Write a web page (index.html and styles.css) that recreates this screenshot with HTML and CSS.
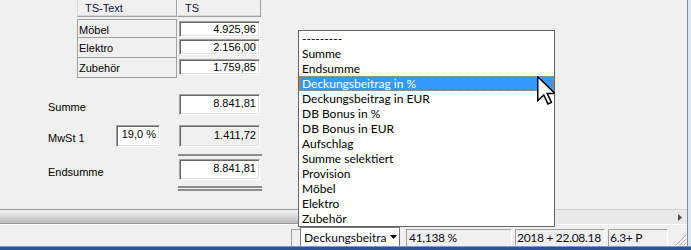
FILE: index.html
```html
<!DOCTYPE html>
<html lang="de">
<head>
<meta charset="utf-8">
<title>Auswertung</title>
<link rel="stylesheet" href="styles.css">
</head>
<body>
<div class="window">
  <div class="frame-body">
    <div class="client">
      <div class="main">
        <div class="grid-table">
          <div class="th th-first">TS-Text</div>
          <div class="th">TS</div>
          <div class="td-label">Möbel</div>
          <div class="td-val"><div class="field">4.925,96</div></div>
          <div class="td-label">Elektro</div>
          <div class="td-val"><div class="field">2.156,00</div></div>
          <div class="td-label td-last">Zubehör</div>
          <div class="td-val"><div class="field">1.759,85</div></div>
        </div>
        <div class="totals">
          <div class="trow r-summe">
            <span class="tlabel">Summe</span>
            <div class="field f-val">8.841,81</div>
          </div>
          <div class="trow r-mwst">
            <span class="tlabel">MwSt 1</span>
            <div class="field f-pct">19,0 %</div>
            <div class="field f-val f-disabled">1.411,72</div>
          </div>
          <div class="trow r-rule">
            <div class="rule"></div>
          </div>
          <div class="trow r-end">
            <span class="tlabel">Endsumme</span>
            <div class="field f-val">8.841,81</div>
          </div>
          <div class="trow r-double">
            <div class="double"><div class="rule"></div><div class="rule"></div></div>
          </div>
        </div>
      </div>
      <div class="hscroll">
        <div class="thumb"></div>
        <div class="track"></div>
        <div class="sbtn"><svg width="4" height="7" viewBox="0 0 4 7"><path d="M0 0 L4 3.5 L0 7 Z" fill="#4a4a4a"/></svg></div>
      </div>
      <div class="status">
        <div class="sp-empty"></div>
        <div class="sp-bracket"></div>
        <div class="combo">
          <span class="combo-text">Deckungsbeitra</span>
          <span class="combo-btn"><svg width="7" height="4" viewBox="0 0 7 4"><path d="M0 0 H7 L3.5 4 Z" fill="#000"/></svg></span>
        </div>
        <div class="panel p-pct">41,138 %</div>
        <div class="panel p-date">2018 + 22.08.18</div>
        <div class="panel p-ver">6.3+ P</div>
        <div class="grip"><svg width="12" height="12" viewBox="0 0 12 12">
          <path d="M11 1 L1 11 M11 5 L5 11 M11 9 L9 11" stroke="#a8a8a8" stroke-width="1"/>
          <path d="M12 2 L2 12 M12 6 L6 12 M12 10 L10 12" stroke="#ffffff" stroke-width="1"/>
        </svg></div>
      </div>
    </div>
    <div class="rframe"></div>
  </div>
  <div class="bframe"></div>

  <ul class="dropdown">
    <li>---------</li>
    <li>Summe</li>
    <li>Endsumme</li>
    <li class="sel">Deckungsbeitrag in %</li>
    <li>Deckungsbeitrag in EUR</li>
    <li>DB Bonus in %</li>
    <li>DB Bonus in EUR</li>
    <li>Aufschlag</li>
    <li>Summe selektiert</li>
    <li>Provision</li>
    <li>Möbel</li>
    <li>Elektro</li>
    <li>Zubehör</li>
  </ul>

  <svg class="cursor" width="18" height="29" viewBox="0 0 12 19.3">
    <path d="M0.5 0.5 L0.5 16.5 L4.5 12.6 L7.3 18.6 L9.6 17.6 L6.8 11.6 L12 11.6 Z" fill="#fff" stroke="#000" stroke-width="1" stroke-linejoin="miter"/>
  </svg>
</div>
</body>
</html>
```

FILE: styles.css
```css
html, body {
  margin: 0;
  padding: 0;
  background: #f0f0f0;
}

.window {
  position: relative;
  width: 691px;
  height: 250px;
  overflow: hidden;
  background: #f0f0f0;
  font-family: "Liberation Sans", Arial, sans-serif;
  font-size: 11px;
  color: #000;
}

.frame-body {
  display: flex;
  height: 246px;
}

.client {
  width: 687px;
  display: flex;
  flex-direction: column;
}

.main {
  height: 209px;
}

.rframe {
  width: 4px;
  box-sizing: border-box;
  border-left: 1px solid #7f8a96;
  background: #dbe6f2;
}

.bframe {
  height: 4px;
  box-sizing: border-box;
  border-top: 1px solid #6f9ddc;
  background: #2c5491;
}

/* ---------- table ---------- */
.grid-table {
  margin-left: 77px;
  width: 184px;
  display: grid;
  grid-template-columns: 100px 84px;
  grid-template-rows: 17px 20px 20px 21px;
}

.th {
  box-sizing: border-box;
  height: 17px;
  padding-left: 7px;
  line-height: 16px;
  color: #14104a;
  background: #f0f0f0;
  border-left: 1px solid #ffffff;
  border-right: 1px solid #a0a0a0;
  border-bottom: 1px solid #a0a0a0;
  box-shadow: inset 0 -1px 0 #d8d8d8;
}

.th-first {
  border-left: 1px solid #d8d8d8;
}

.grid-table .td-label:nth-child(3),
.grid-table .td-val:nth-child(4) {
  margin-top: 2px;
}

.td-label {
  box-sizing: border-box;
  border-top: 1px solid #a0a0a0;
  border-left: 1px solid #a0a0a0;
  border-right: 1px solid #a0a0a0;
  padding-left: 1px;
  display: flex;
  align-items: center;
  height: 20px;
}

.td-last {
  border-bottom: 1px solid #a0a0a0;
  height: 21px;
}

.td-val {
  padding-left: 2px;
  padding-top: 2px;
}

.field {
  box-sizing: border-box;
  width: 81px;
  height: 16px;
  background: #fff;
  border: 1px solid;
  border-color: #a0a0a0 #ffffff #ffffff #a0a0a0;
  box-shadow: inset 1px 1px 0 #696969, inset -1px -1px 0 #e3e3e3;
  text-align: right;
  padding-right: 3px;
  line-height: 14px;
}

/* ---------- totals ---------- */
.totals {
  display: flex;
  flex-direction: column;
}

.trow {
  display: grid;
  grid-template-columns: 48px 68px 44px 19px 81px;
  align-items: center;
}

.tlabel {
  grid-column: 2;
  padding-top: 4px;
}

.f-val {
  grid-column: 5;
  height: 21px;
  line-height: 15px;
  padding-top: 1px;
}

.f-pct {
  grid-column: 3;
  width: 44px;
  height: 22px;
  line-height: 17px;
}

.f-disabled {
  background: #f0f0f0;
  height: 22px;
  line-height: 17px;
}

.r-summe {
  margin-top: 16px;
  height: 21px;
}

.r-mwst {
  margin-top: 10px;
  height: 22px;
}

.r-rule {
  margin-top: 7px;
}

.rule {
  grid-column: 5;
  height: 2px;
  margin-left: -1px;
  width: 84px;
  background: #8c8c8c;
}

.r-end {
  margin-top: 3px;
  height: 21px;
}

.r-double {
  margin-top: 6px;
}

.double {
  grid-column: 5;
  display: flex;
  flex-direction: column;
  gap: 1px;
}

/* ---------- scrollbar ---------- */
.hscroll {
  height: 16px;
  display: flex;
  border-bottom: 1px solid #ffffff;
  box-sizing: border-box;
}

.thumb {
  flex: 0 0 545px;
  box-sizing: border-box;
  border-top: 1px solid #979797;
  border-bottom: 1px solid #979797;
  background: linear-gradient(#f2f2f2, #e4e4e4 35%, #d3d3d3 55%, #c6c6c6 80%, #bcbcbc);
}

.track {
  flex: 1;
  box-sizing: border-box;
  border-top: 1px solid #d4d4d4;
  background: #e9e9e9;
}

.sbtn {
  width: 16px;
  box-sizing: border-box;
  border-top: 1px solid #d4d4d4;
  background: #e9e9e9;
  display: flex;
  align-items: center;
  justify-content: center;
  padding-left: 2px;
}

/* ---------- status bar ---------- */
.status {
  height: 21px;
  display: flex;
  align-items: flex-end;
  font-family: Lato, "Noto Sans", sans-serif;
  font-size: 12px;
  letter-spacing: -0.3px;
  color: #0a0a28;
}

.sp-empty {
  width: 291px;
}

.sp-bracket {
  box-sizing: border-box;
  width: 9px;
  height: 17px;
  border-left: 1px solid #a0a0a0;
  border-top: 1px solid #a0a0a0;
}

.combo {
  box-sizing: border-box;
  width: 100px;
  height: 19px;
  background: #fff;
  border: 1px solid #7a7a7a;
  border-bottom: none;
  display: flex;
  align-items: center;
  letter-spacing: 0;
}

.combo-text {
  flex: 1;
  padding-left: 3px;
  overflow: hidden;
  white-space: nowrap;
}

.combo-btn {
  width: 12px;
  height: 100%;
  display: flex;
  align-items: center;
  justify-content: center;
}

.panel {
  box-sizing: border-box;
  height: 17px;
  margin-left: 6px;
  padding-left: 2px;
  line-height: 15px;
  white-space: nowrap;
  overflow: hidden;
  border: 1px solid;
  border-color: #a0a0a0 #ffffff #ffffff #a0a0a0;
  border-bottom: none;
}

.p-pct { width: 106px; }
.p-date { width: 90px; margin-left: 3px; padding-left: 1px; }
.p-ver { width: 60px; margin-left: 3px; padding-left: 1px; }

.grip {
  margin-left: auto;
  width: 12px;
  height: 12px;
  display: flex;
}

/* ---------- dropdown list ---------- */
.dropdown {
  position: absolute;
  left: 298px;
  top: 30px;
  width: 257px;
  margin: 0;
  padding: 0;
  list-style: none;
  box-sizing: border-box;
  background: #fff;
  border: 1px solid #646464;
  font-family: Lato, "Noto Sans", sans-serif;
  font-size: 12px;
  color: #000;
}

.dropdown li {
  height: 15px;
  line-height: 15px;
  padding-left: 3px;
  white-space: nowrap;
}

.dropdown li.sel {
  box-sizing: border-box;
  background: #3399ff;
  color: #fff;
  border: 1px dotted #e0882a;
  padding-left: 2px;
  line-height: 13px;
}

.cursor {
  position: absolute;
  left: 537px;
  top: 76px;
}
```
